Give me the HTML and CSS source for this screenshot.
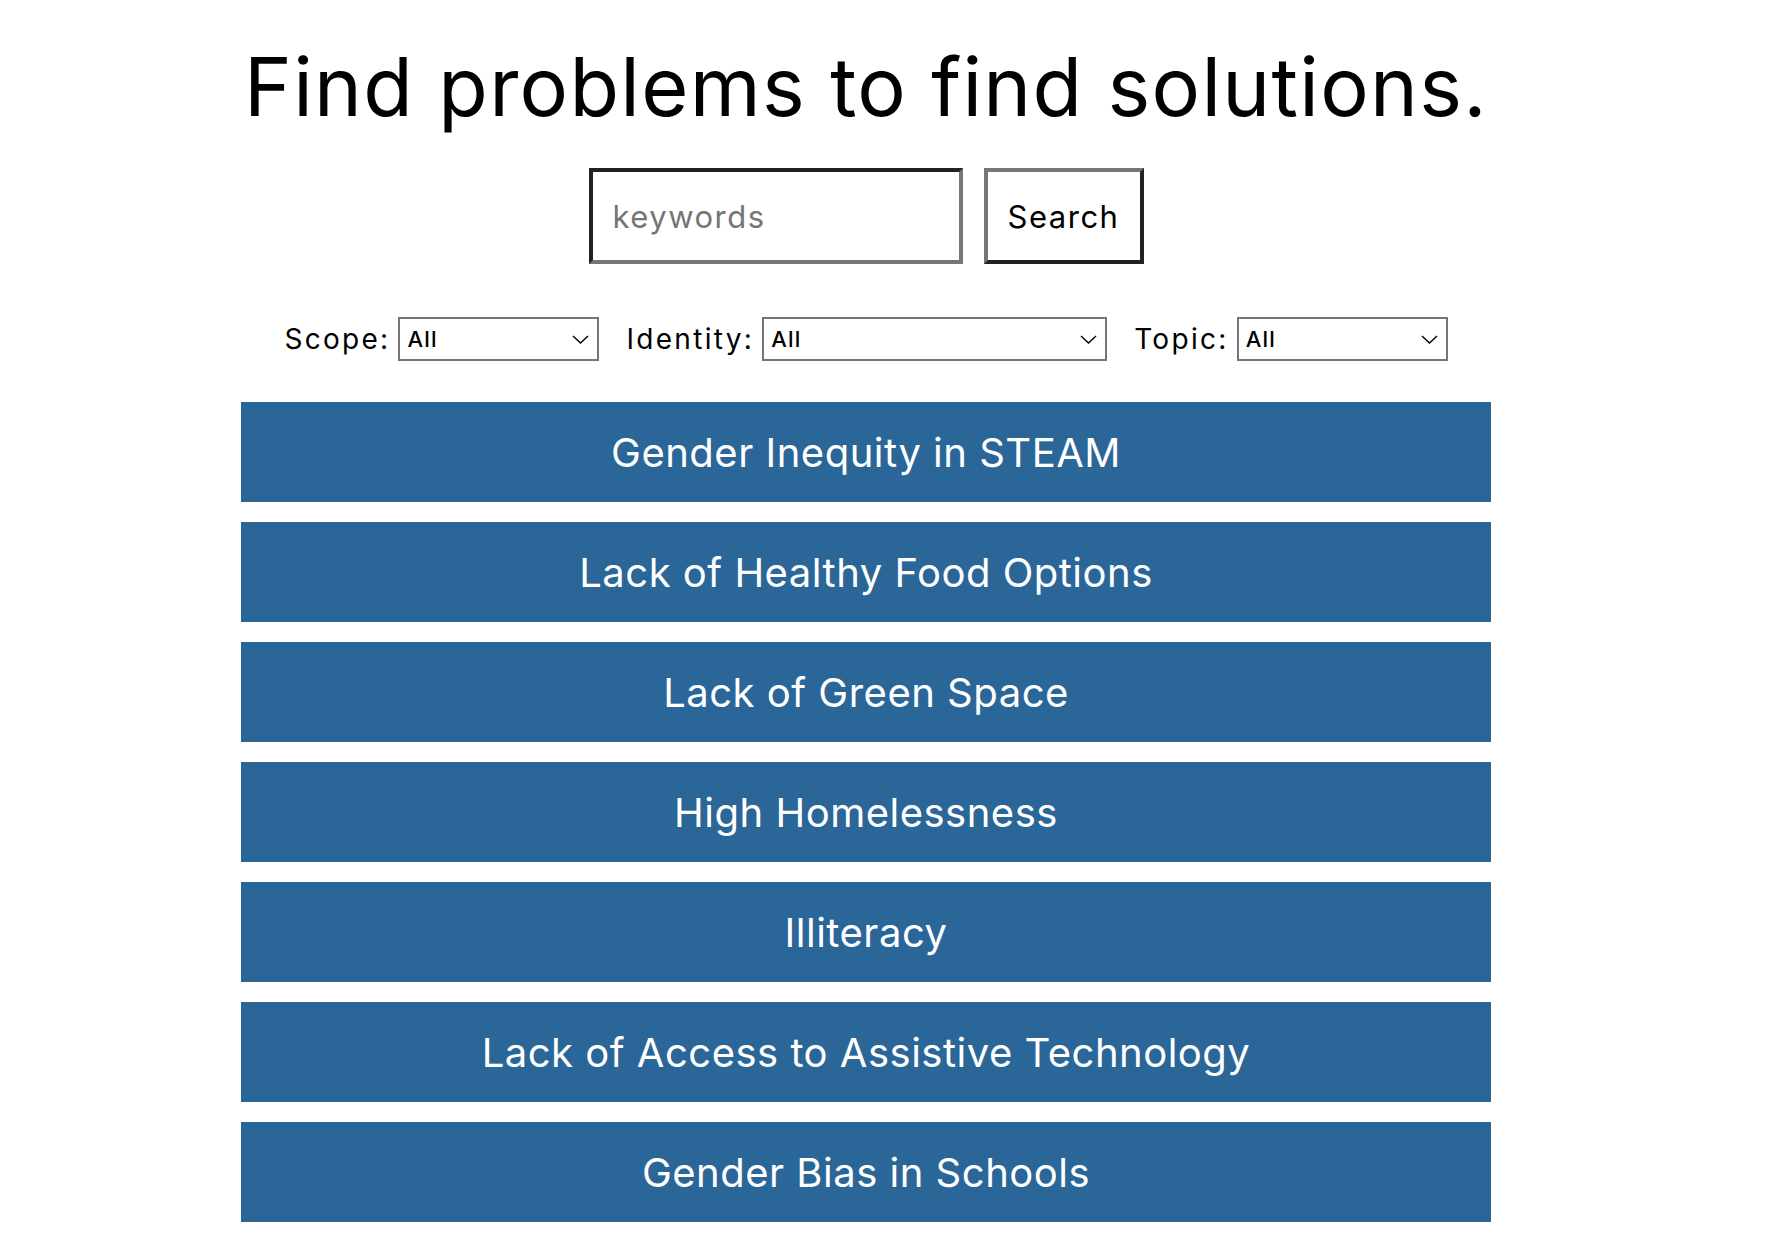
FILE: index.html
```html
<!DOCTYPE html>
<html>
<head>
<meta charset="utf-8">
<title>Find problems</title>
<link rel="stylesheet" href="styles.css">
</head>
<body>
<main class="page">
    <h1 class="title">Find problems to find solutions.</h1>

    <form class="search">
        <input class="search-input" type="text" placeholder="keywords">
        <button class="search-btn" type="button">Search</button>
    </form>

    <div class="filters">
        <label class="filter">
            <span class="filter-label">Scope:</span>
            <select class="filter-select scope"><option>All</option></select>
        </label>
        <label class="filter">
            <span class="filter-label">Identity:</span>
            <select class="filter-select identity"><option>All</option></select>
        </label>
        <label class="filter">
            <span class="filter-label">Topic:</span>
            <select class="filter-select topic"><option>All</option></select>
        </label>
    </div>

    <ul class="problems">
        <li><a class="problem" href="#">Gender Inequity in STEAM</a></li>
        <li><a class="problem" href="#">Lack of Healthy Food Options</a></li>
        <li><a class="problem" href="#">Lack of Green Space</a></li>
        <li><a class="problem" href="#">High Homelessness</a></li>
        <li><a class="problem" href="#">Illiteracy</a></li>
        <li><a class="problem" href="#">Lack of Access to Assistive Technology</a></li>
        <li><a class="problem" href="#">Gender Bias in Schools</a></li>
    </ul>
</main>
</body>
</html>
```

FILE: styles.css
```css
body {
margin: 0;
background: #ffffff;
color: #000000;
font-family: Inter, "Open Sans", sans-serif;
}

.page {
width: 1732px;
display: flex;
flex-direction: column;
align-items: center;
padding-top: 47px;
}

.title {
margin: 0;
font-size: 81px;
font-weight: 400;
line-height: 81px;
letter-spacing: 1.3px;
}

/* search box */
.search {
display: flex;
gap: 21px;
margin-top: 40px;
}
.search-input,
.search-btn {
box-sizing: border-box;
height: 96px;
border-width: 4px;
border-style: solid;
font-family: inherit;
font-size: 31px;
letter-spacing: 1.5px;
background: #ffffff;
margin: 0;
}
.search-input {
width: 374px;
padding: 0 20px;
border-color: #222222 #767676 #767676 #222222;
color: #000000;
outline: none;
}
.search-input::placeholder {
color: #757575;
}
.search-btn {
width: 160px;
padding: 0;
border-color: #767676 #222222 #222222 #767676;
color: #000000;
}

/* filters */
.filters {
display: flex;
align-items: center;
gap: 27px;
margin-top: 53px;
}
.filter {
display: flex;
align-items: center;
gap: 8px;
}
.filter-label {
font-size: 28px;
letter-spacing: 2.3px;
}
.filter-select {
box-sizing: border-box;
height: 44px;
border: 2px solid #767676;
border-radius: 0;
padding: 0 32px 0 7px;
font-family: inherit;
font-size: 22px;
font-weight: 500;
letter-spacing: 1.2px;
color: #000000;
-webkit-appearance: none;
appearance: none;
background: #ffffff url("data:image/svg+xml,%3Csvg xmlns='http://www.w3.org/2000/svg' width='17' height='9' viewBox='0 0 17 9'%3E%3Cpath d='M1 1l7.5 7 7.5-7' fill='none' stroke='%23000' stroke-width='1.4'/%3E%3C/svg%3E") no-repeat right 8px center;
}
.scope { width: 201px; }
.identity { width: 345px; }
.topic { width: 211px; }

/* problem list */
.problems {
list-style: none;
margin: 41px 0 0 0;
padding: 0;
width: 1250px;
display: flex;
flex-direction: column;
gap: 20px;
}
.problem {
display: flex;
align-items: center;
justify-content: center;
height: 100px;
background: #2b6698;
color: #ffffff;
font-size: 40px;
letter-spacing: 0.5px;
text-decoration: none;
}
```
